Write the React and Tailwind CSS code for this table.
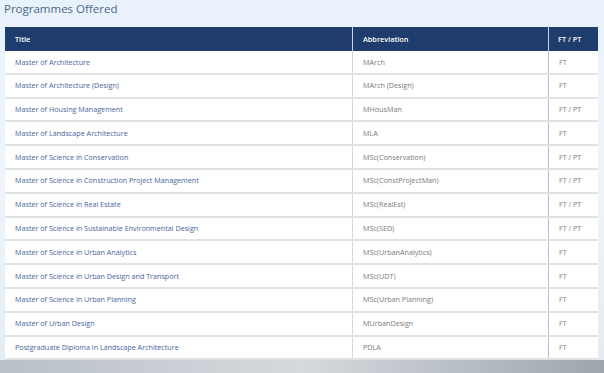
const programmes = [
  ["Master of Architecture", "MArch", "FT"],
  ["Master of Architecture (Design)", "MArch (Design)", "FT"],
  ["Master of Housing Management", "MHousMan", "FT / PT"],
  ["Master of Landscape Architecture", "MLA", "FT"],
  ["Master of Science in Conservation", "MSc(Conservation)", "FT / PT"],
  ["Master of Science in Construction Project Management", "MSc(ConstProjectMan)", "FT / PT"],
  ["Master of Science in Real Estate", "MSc(RealEst)", "FT / PT"],
  ["Master of Science in Sustainable Environmental Design", "MSc(SED)", "FT / PT"],
  ["Master of Science in Urban Analytics", "MSc(UrbanAnalytics)", "FT"],
  ["Master of Science in Urban Design and Transport", "MSc(UDT)", "FT"],
  ["Master of Science in Urban Planning", "MSc(Urban Planning)", "FT"],
  ["Master of Urban Design", "MUrbanDesign", "FT"],
  ["Postgraduate Diploma in Landscape Architecture", "PDLA", "FT"],
];

export default function App() {
  return (
    <div
      className="w-[604px] h-[373px] overflow-hidden flex flex-col bg-gradient-to-b from-[#e9f2fc] via-[#eef4fa] to-[#e4ebf2]"
      style={{ fontFamily: '"Open Sans", "Noto Sans", sans-serif' }}
    >
      <h2 className="px-[4px] pt-[1px] h-[27px] text-[11.5px] text-[#4b6786] leading-[16px]">
        Programmes Offered
      </h2>

      <div className="mx-[5px] w-[593px]">
        {/* header */}
        <div className="flex h-[24px] bg-[#1e3d6c] text-white text-[7.3px] font-semibold">
          <div className="w-[348px] flex items-center pl-[10px] border-r border-[#c9d4e2]">Title</div>
          <div className="w-[196px] flex items-center pl-[10px] border-r border-[#c9d4e2]">Abbreviation</div>
          <div className="flex-1 flex items-center pl-[9px]">FT / PT</div>
        </div>

        {/* rows */}
        {programmes.map(([title, abbr, mode]) => (
          <div
            key={title}
            className="flex h-[23.8px] bg-white border-b-2 border-[#dfe2e6] text-[7.2px]"
          >
            <div className="w-[348px] flex items-center pl-[10px] text-[#4a63a0] border-r border-[#d4d7db]">
              {title}
            </div>
            <div className="w-[196px] flex items-center pl-[10px] text-[#7a7a7a] border-r border-[#b9bcc0]">
              {abbr}
            </div>
            <div className="flex-1 flex items-center pl-[10px] text-[#7a7a7a]">{mode}</div>
          </div>
        ))}
      </div>

      {/* building photo strip */}
      <div className="flex-1 bg-gradient-to-r from-[#b9c0c6] via-[#d5dade] to-[#9ea6ad]" />
    </div>
  );
}
